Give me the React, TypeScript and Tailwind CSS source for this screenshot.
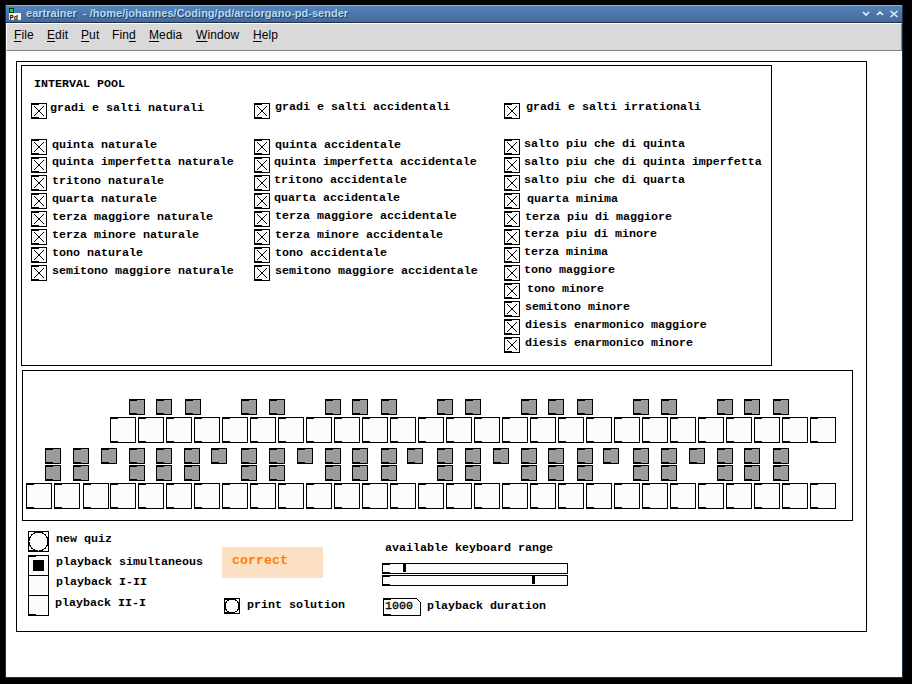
import React from "react";

type Row = { text: string; dx: number; dy: number };

const row = (text: string, dx: number, dy: number): Row => ({ text, dx, dy });

// dx: gap between toggle and label, dy: top of the label relative to the toggle
const columns: { className: string; head: Row; rows: Row[] }[] = [
  {
    className: "w-[223px]",
    head: row("gradi e salti naturali", 3, -3),
    rows: [
      row("quinta naturale", 5, -2),
      row("quinta imperfetta naturale", 5, -3),
      row("tritono naturale", 5, -2),
      row("quarta naturale", 5, -2),
      row("terza maggiore naturale", 5, -2),
      row("terza minore naturale", 5, -2),
      row("tono naturale", 5, -2),
      row("semitono maggiore naturale", 5, -2),
    ],
  },
  {
    className: "w-[250px]",
    head: row("gradi e salti accidentali", 5, -4),
    rows: [
      row("quinta accidentale", 5, -2),
      row("quinta imperfetta accidentale", 4, -3),
      row("tritono accidentale", 4, -3),
      row("quarta accidentale", 4, -3),
      row("terza maggiore accidentale", 5, -3),
      row("terza minore accidentale", 5, -2),
      row("tono accidentale", 5, -2),
      row("semitono maggiore accidentale", 5, -2),
    ],
  },
  {
    className: "w-[260px]",
    head: row("gradi e salti irrationali", 6, -4),
    rows: [
      row("salto piu che di quinta", 4, -3),
      row("salto piu che di quinta imperfetta", 4, -3),
      row("salto piu che di quarta", 4, -3),
      row("quarta minima", 7, -2),
      row("terza piu di maggiore", 5, -2),
      row("terza piu di minore", 4, -3),
      row("terza minima", 4, -3),
      row("tono maggiore", 4, -3),
      row("tono minore", 7, -2),
      row("semitono minore", 5, -2),
      row("diesis enarmonico maggiore", 5, -2),
      row("diesis enarmonico minore", 5, -2),
    ],
  },
];

const upperDark = [129, 156, 185, 241, 269, 325, 352, 381, 437, 465, 521, 548, 577, 633, 661, 717, 744, 773];
const middleDark = [45, 73, 101, 129, 156, 184, 211, 241, 269, 297, 325, 352, 381, 407, 437, 465, 493, 521, 548, 577, 603, 633, 661, 689, 717, 744, 773];
const lowerDark = [45, 73, 129, 156, 184, 241, 269, 325, 352, 381, 437, 465, 521, 548, 577, 633, 661, 717, 744, 773];
const upperLight = Array.from({ length: 26 }, (_, i) => 110 + i * 28);
const lowerLight = [26, 54, 83, ...upperLight];

const KEYS_LEFT = 23;

function Lets() {
  return (
    <span className="flex h-full w-2 flex-col justify-between">
      <span className="h-px bg-black" />
      <span className="h-px bg-black" />
    </span>
  );
}

function Toggle() {
  return (
    <svg width="16" height="16" viewBox="0 0 16 16" shapeRendering="crispEdges" className="shrink-0">
      <rect x="0.5" y="0.5" width="15" height="15" fill="#fcfcfc" stroke="#000" />
      <path d="M0 0h8v2H0zM0 14h8v2H0z" />
      <path d="M3 3L13 13M3 13L13 3" stroke="#000" fill="none" />
    </svg>
  );
}

function Label({ text, dx, dy }: Row) {
  return (
    <span className="h-4 whitespace-pre font-bold leading-4" style={{ marginLeft: dx, marginTop: dy }}>
      {text}
    </span>
  );
}

function Keys({ xs, dark, className }: { xs: number[]; dark?: boolean; className: string }) {
  const size = dark ? 16 : 26;
  return (
    <div className={"flex " + className}>
      {xs.map((x, i) => (
        <div
          key={x}
          className={
            dark
              ? "size-4 shrink-0 border border-black bg-[#9c9c9c]"
              : "size-[26px] shrink-0 border border-black bg-[#fcfcfc]"
          }
          style={{ marginLeft: i === 0 ? x - KEYS_LEFT : x - xs[i - 1] - size }}
        >
          <div className="-ml-px h-full w-2">
            <Lets />
          </div>
        </div>
      ))}
    </div>
  );
}

function Bang({ size }: { size: number }) {
  const c = size / 2;
  return (
    <svg width={size} height={size} viewBox={`0 0 ${size} ${size}`} shapeRendering="crispEdges" className="block shrink-0">
      <rect x="0.5" y="0.5" width={size - 1} height={size - 1} fill="#fcfcfc" stroke="#000" />
      <path d={`M0 0h8v${size > 16 ? 1 : 2}H0zM0 ${size - 2}h8v2H0z`} />
      <circle cx={c} cy={c} r={c - 1} fill="#fcfcfc" stroke="#000" />
    </svg>
  );
}

function Slider({ knob, className }: { knob: string; className: string }) {
  return (
    <div className={"flex h-[11px] w-[186px] border border-black bg-[#fcfcfc] " + className}>
      <div className="-ml-px h-full w-2">
        <Lets />
      </div>
      <div className={"h-2 w-[3px] bg-black " + knob} />
    </div>
  );
}

function TitleBar() {
  return (
    <div className="flex h-[18px] items-start border-b border-t border-b-[#1d3350] border-t-[#78b4f0] bg-linear-to-b from-[#5484bc] to-[#456998]">
      <svg width="12" height="13" viewBox="0 0 12 13" className="ml-[3px] mt-0.5">
        <rect x="0" y="0" width="5" height="5" fill="#063a06" />
        <rect x="1" y="1" width="3" height="3" fill="#00e818" />
        <rect x="0" y="5" width="12" height="7" fill="#f4f4f4" />
        <text x="0.5" y="11.500" fontSize="7" fontWeight="bold" fill="#111" fontFamily="Liberation Mono, monospace">
          Pd
        </text>
      </svg>
      <span className="ml-[5px] -mt-px whitespace-pre font-['Liberation_Sans',sans-serif] text-[11px] font-bold leading-4 tracking-[0.01px] text-[#b4dcfa] [text-shadow:1px_1px_0_#25405f]">
        eartrainer  - /home/johannes/Coding/pd/arciorgano-pd-sender
      </span>
      <svg width="37" height="8" viewBox="0 0 37 8" className="ml-auto mr-[3px] mt-[4px]" fill="none" stroke="#e8f0fa" strokeWidth="1.6">
        <path d="M1 2L4 5L7 2M15 5L18 2L21 5M28.500 1L35.500 7M28.500 7L35.500 1" />
      </svg>
    </div>
  );
}

function MenuBar() {
  const items: [string, string, string, string][] = [
    ["", "F", "ile", "w-[33px]"],
    ["", "E", "dit", "w-[34px]"],
    ["", "P", "ut", "w-[31px]"],
    ["Fin", "d", "", "w-[37px]"],
    ["", "M", "edia", "w-[47px]"],
    ["", "W", "indow", "w-[57px]"],
    ["", "H", "elp", "w-[30px]"],
  ];
  return (
    <div className="flex h-7 border-b border-l border-r border-t border-b-[#828282] border-l-white border-r-[#828282] border-t-white bg-[#d9d9d9] pl-[7px] pt-[3px] font-['Liberation_Sans',sans-serif] text-[12px] leading-4 tracking-[0.1px]">
      {items.map(([a, b, c, w]) => (
        <span key={b} className={w}>
          {a}
          <span className="underline decoration-1 underline-offset-2">{b}</span>
          {c}
        </span>
      ))}
    </div>
  );
}

export default function App() {
  return (
    <div className="h-[684px] w-[912px] overflow-hidden bg-black pl-[5px] pt-[5px]">
      <div className="flex h-[673px] w-[898px] flex-col border border-[#1d2f45] border-t-[#1d2f45] bg-white font-['Liberation_Mono',monospace] text-[11.667px] text-black">
        <div className="-mt-px">
          <TitleBar />
        </div>
        <MenuBar />
        <div className="ml-2.5 mt-2.5 h-[571px] w-[851px] border border-black pl-1 pt-[3px]">
          <section className="h-[301px] w-[751px] border border-black">
            <h1 className="ml-3 mt-2.5 h-4 whitespace-pre font-bold leading-4">INTERVAL POOL</h1>
            <div className="ml-[9px] mt-[11px] flex">
              {columns.map((col) => (
                <div key={col.head.text} className={col.className}>
                  <div className="mb-[18px] flex h-[18px] items-start">
                    <Toggle />
                    <Label {...col.head} />
                  </div>
                  {col.rows.map((r) => (
                    <div key={r.text} className="flex h-[18px] items-start">
                      <Toggle />
                      <Label {...r} />
                    </div>
                  ))}
                </div>
              ))}
            </div>
          </section>

          <section className="ml-px mt-1 h-[151px] w-[831px] border border-black pt-7">
            <Keys xs={upperDark} dark className="h-[18px]" />
            <Keys xs={upperLight} className="h-[31px]" />
            <Keys xs={middleDark} dark className="h-[17px]" />
            <Keys xs={lowerDark} dark className="h-[18px]" />
            <Keys xs={lowerLight} className="h-[26px]" />
          </section>

          <section className="ml-[7px] flex">
            <div className="w-[194px]">
              <div className="mt-2.5 flex h-6 items-start">
                <Bang size={21} />
                <Label text="new quiz" dx={7} dy={0} />
              </div>
              <div className="flex">
                <div className="h-[61px] w-[21px] border border-black bg-[#fcfcfc]">
                  <div className="h-5 border-b border-black">
                    <div className="-ml-px h-px w-2 bg-black" />
                    <div className="ml-1 mt-[3px] size-[11px] bg-black" />
                  </div>
                  <div className="h-5 border-b border-black" />
                  <div className="-ml-px mt-[18px] h-px w-2 bg-black" />
                </div>
                <div className="flex flex-col">
                  <Label text="playback simultaneous" dx={7} dy={-1} />
                  <Label text="playback I-II" dx={7} dy={4} />
                  <Label text="playback II-I" dx={6} dy={5} />
                </div>
              </div>
            </div>
            <div className="w-[160px]">
              <div className="mt-[26px] h-[31px] w-[101px] bg-[#fce0c4] pl-2.5 pt-1.5 text-[13.333px] font-bold leading-4 text-[#ff8000]">
                correct
              </div>
              <div className="ml-0.5 mt-5 flex items-start">
                <Bang size={16} />
                <Label text="print solution" dx={7} dy={-1} />
              </div>
            </div>
            <div className="flex flex-col">
              <Label text="available keyboard range" dx={3} dy={19} />
              <Slider knob="ml-[13px]" className="mt-[7px]" />
              <Slider knob="ml-[142px]" className="mt-px" />
              <div className="mt-3 flex items-start pl-px">
                <div className="grid h-[18px] w-[38px]">
                  <svg width="38" height="18" viewBox="0 0 38 18" shapeRendering="crispEdges" className="col-start-1 row-start-1">
                    <path d="M0.500 0.500H33.500L37.500 4.500V17.500H0.500Z" fill="#fcfcfc" stroke="#000" />
                    <path d="M0 0h8v2H0zM0 16h8v2H0z" />
                  </svg>
                  <span className="z-10 col-start-1 row-start-1 pl-0.5 leading-4 [-webkit-text-stroke:0.3px_black]">1000</span>
                </div>
                <Label text="playback duration" dx={6} dy={0} />
              </div>
            </div>
          </section>
        </div>
      </div>
    </div>
  );
}
